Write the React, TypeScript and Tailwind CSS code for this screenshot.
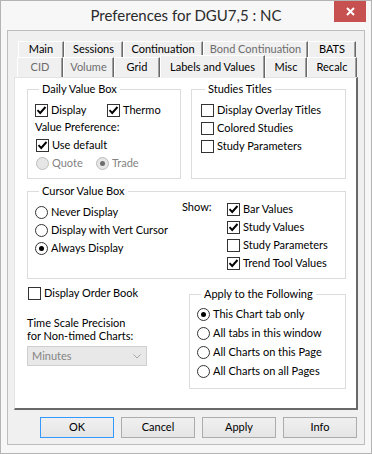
import React from 'react';
import clsx from 'clsx';

type TabDef = { label: string; w: string; disabled?: boolean; selected?: boolean };

const topRow: TabDef[] = [
  { label: 'Main', w: 'w-[46px]' },
  { label: 'Sessions', w: 'w-[59px]' },
  { label: 'Continuation', w: 'w-[80px]' },
  { label: 'Bond Continuation', w: 'w-[105px]', disabled: true },
  { label: 'BATS', w: 'w-[48px]' },
];

const bottomRow: TabDef[] = [
  { label: 'CID', w: 'w-[46px]', disabled: true },
  { label: 'Volume', w: 'w-[51px]', disabled: true },
  { label: 'Grid', w: 'w-[46px]' },
  { label: 'Labels and Values', w: 'w-[105px]', selected: true },
  { label: 'Misc', w: 'w-[42px]' },
  { label: 'Recalc', w: 'w-[50px]' },
];

function Tab({ tab }: { tab: TabDef }) {
  return (
    <div
      className={clsx(
        tab.w,
        'flex items-center justify-center border-l border-t border-r border-white border-r-[#696969] bg-[#f0f0f0] shadow-[inset_-1px_0_0_#a0a0a0]',
        tab.selected ? 'relative z-10 -mb-px h-[23px]' : 'h-full',
        tab.disabled ? 'text-[#6d6d6d]' : 'text-black'
      )}
    >
      {tab.label}
    </div>
  );
}

function CheckBox({ checked }: { checked?: boolean }) {
  return (
    <span className="flex h-[13px] w-[13px] shrink-0 items-center justify-center border border-[#333333] bg-white">
      {checked && (
        <svg width="11" height="11" viewBox="0 0 11 11">
          <path d="M1.5 5.2 L4.2 8 L9.5 2" fill="none" stroke="#000" strokeWidth="1.9" />
        </svg>
      )}
    </span>
  );
}

function Radio({ checked, disabled }: { checked?: boolean; disabled?: boolean }) {
  return (
    <span
      className={clsx(
        'flex h-[13px] w-[13px] shrink-0 items-center justify-center rounded-full border',
        disabled ? 'border-[#bcbcbc] bg-[#e6e6e6]' : 'border-[#333333] bg-white'
      )}
    >
      {checked && (
        <span className={clsx('h-[5px] w-[5px] rounded-full', disabled ? 'bg-[#6d6d6d]' : 'bg-black')} />
      )}
    </span>
  );
}

function CheckRow({ label, checked, className }: { label: string; checked?: boolean; className?: string }) {
  return (
    <div className={clsx('flex items-center gap-[3px]', className)}>
      <CheckBox checked={checked} />
      <span>{label}</span>
    </div>
  );
}

function RadioRow({
  label,
  checked,
  disabled,
  className,
}: {
  label: string;
  checked?: boolean;
  disabled?: boolean;
  className?: string;
}) {
  return (
    <div className={clsx('flex items-center gap-[3px]', disabled && 'text-[#838383]', className)}>
      <Radio checked={checked} disabled={disabled} />
      <span>{label}</span>
    </div>
  );
}

function Group({ title, className, children }: { title: string; className?: string; children: React.ReactNode }) {
  return (
    <fieldset className={clsx('border border-[#dcdcdc]', className)}>
      <legend className="ml-[4px] px-[3px] leading-[14px]">{title}</legend>
      {children}
    </fieldset>
  );
}

function Button({ label, focused }: { label: string; focused?: boolean }) {
  return (
    <div
      className={clsx(
        'flex h-[21px] w-[74px] items-center justify-center border bg-linear-to-b from-[#f0f0f0] to-[#e5e5e5]',
        focused ? 'border-[#3399ff]' : 'border-[#acacac]'
      )}
    >
      {label}
    </div>
  );
}

export default function App() {
  return (
    <div className="relative h-[454px] w-[372px] border border-[#b4b4b4] bg-[#f7f7f7] font-['Lato',sans-serif] text-[11px] text-black">
      <div className="flex h-[29px] items-center justify-center text-[15px] text-[#2b2b2b]">
        Preferences for DGU7,5 : NC
      </div>
      <div className="absolute right-[5px] top-0 flex h-[21px] w-[32px] items-center justify-center bg-[#c75050]">
        <svg width="9" height="9" viewBox="0 0 9 9">
          <path d="M1 1 L8 8 M8 1 L1 8" stroke="#fff" strokeWidth="2" />
        </svg>
      </div>

      <div className="mx-[6px] h-[415px] border border-[#bdbdbd] bg-[#f0f0f0] pt-[10px]">
        <div className="ml-[10px] flex h-[16px]">
          {topRow.map((t) => (
            <Tab key={t.label} tab={t} />
          ))}
        </div>
        <div className="ml-[9px] flex h-[20px] items-end">
          {bottomRow.map((t) => (
            <Tab key={t.label} tab={t} />
          ))}
        </div>

        <div className="ml-[6px] h-[333px] w-[344px] border-l border-t border-[#e3e3e3] border-r-2 border-b-2 border-r-[#696969] border-b-[#696969] bg-white pl-[12px] pt-[4px]">
          <div className="flex gap-[10px]">
            <Group title="Daily Value Box" className="h-[97px] w-[154px] pl-[7px]">
              <div className="pt-[5px]">
                <div className="flex h-[18px] items-center">
                  <CheckRow label="Display" checked className="w-[72px]" />
                  <CheckRow label="Thermo" checked />
                </div>
                <div className="flex h-[17px] items-center">Value Preference:</div>
                <CheckRow label="Use default" checked className="ml-px h-[18px]" />
                <div className="ml-px flex h-[18px] items-center">
                  <RadioRow label="Quote" disabled className="w-[60px]" />
                  <RadioRow label="Trade" checked disabled />
                </div>
              </div>
            </Group>
            <Group title="Studies Titles" className="h-[97px] w-[155px] pl-[9px]">
              <div className="pt-[5px]">
                <CheckRow label="Display Overlay Titles" className="h-[18px]" />
                <CheckRow label="Colored Studies" className="h-[18px]" />
                <CheckRow label="Study Parameters" className="h-[18px]" />
              </div>
            </Group>
          </div>

          <Group title="Cursor Value Box" className="mt-[5px] h-[95px] w-[319px] pl-[7px]">
            <div className="flex">
              <div className="w-[147px] pt-[5px]">
                <RadioRow label="Never Display" className="h-[18px]" />
                <RadioRow label="Display with Vert Cursor" className="h-[18px]" />
                <RadioRow label="Always Display" checked className="h-[18px]" />
              </div>
              <div className="flex h-[18px] w-[45px] items-center">Show:</div>
              <div className="pt-[2px]">
                <CheckRow label="Bar Values" checked className="h-[18px]" />
                <CheckRow label="Study Values" checked className="h-[18px]" />
                <CheckRow label="Study Parameters" className="h-[18px]" />
                <CheckRow label="Trend Tool Values" checked className="h-[18px]" />
              </div>
            </div>
          </Group>

          <div className="mt-[5px] flex items-start">
            <div className="w-[162px]">
              <CheckRow label="Display Order Book" className="ml-px h-[18px]" />
              <div className="mt-[14px] leading-[13px]">
                <div>Time Scale Precision</div>
                <div>for Non-timed Charts:</div>
              </div>
              <div className="mt-[4px] flex h-[20px] w-[120px] items-center justify-between border border-[#cfcfcf] bg-[#e8e8e8] pl-[4px] pr-[5px] text-[#838383]">
                <span>Minutes</span>
                <svg width="8" height="5" viewBox="0 0 8 5">
                  <path d="M0.5 0.5 L4 4 L7.5 0.5" fill="none" stroke="#a6a6a6" strokeWidth="1" />
                </svg>
              </div>
            </div>
            <Group title="Apply to the Following" className="mt-[3px] h-[102px] w-[157px] pl-[7px]">
              <div className="pt-[4px]">
                <RadioRow label="This Chart tab only" checked className="h-[19px]" />
                <RadioRow label="All tabs in this window" className="h-[19px]" />
                <RadioRow label="All Charts on this Page" className="h-[19px]" />
                <RadioRow label="All Charts on all Pages" className="h-[19px]" />
              </div>
            </Group>
          </div>
        </div>

        <div className="ml-[32px] mt-[7px] flex gap-[7px]">
          <Button label="OK" focused />
          <Button label="Cancel" />
          <Button label="Apply" />
          <Button label="Info" />
        </div>
      </div>
    </div>
  );
}
